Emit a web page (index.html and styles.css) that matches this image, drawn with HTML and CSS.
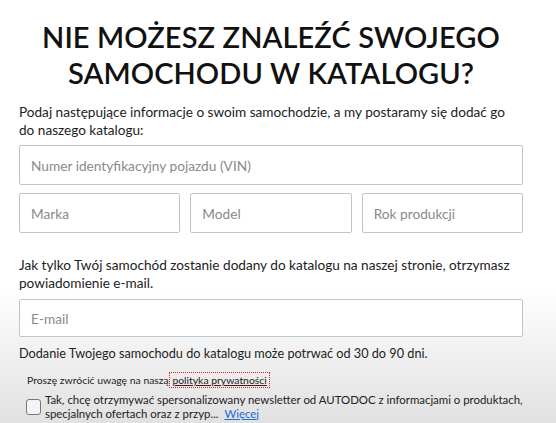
FILE: index.html
```html
<!DOCTYPE html>
<html lang="pl">
<head>
<meta charset="utf-8">
<link rel="stylesheet" href="styles.css">
</head>
<body>
<div class="page">
  <h1 class="title">NIE MOŻESZ ZNALEŹĆ SWOJEGO<br>SAMOCHODU W KATALOGU?</h1>
  <p class="lead">Podaj następujące informacje o swoim samochodzie, a my postaramy się dodać go do naszego katalogu:</p>
  <div class="field">Numer identyfikacyjny pojazdu (VIN)</div>
  <div class="row3">
    <div class="field">Marka</div>
    <div class="field">Model</div>
    <div class="field">Rok produkcji</div>
  </div>
  <p class="lead second">Jak tylko Twój samochód zostanie dodany do katalogu na naszej stronie, otrzymasz powiadomienie e-mail.</p>
  <div class="field email">E-mail</div>
  <p class="note">Dodanie Twojego samochodu do katalogu może potrwać od 30 do 90 dni.</p>
  <p class="privacy">Proszę zwrócić uwagę na naszą <span class="plink">polityka prywatności</span></p>
  <div class="consent">
    <span class="box"></span>
    <span class="ctext">Tak, chcę otrzymywać spersonalizowany newsletter od AUTODOC z informacjami o produktach, specjalnych ofertach oraz z przyp... <a class="more">Więcej</a></span>
  </div>
</div>
</body>
</html>
```
FILE: styles.css
```css
html, body { margin: 0; padding: 0; }
body {
  width: 556px;
  height: 423px;
  overflow: hidden;
  font-family: "Lato", "Liberation Sans", sans-serif;
  color: #222;
  background: linear-gradient(to bottom, #ffffff 0px, #ffffff 290px, #e1e1e1 423px);
}
.page {
  padding: 19px 33px 0 19px;
  display: flex;
  flex-direction: column;
}
.title {
  margin: 0;
  text-align: center;
  font-family: "Lato", sans-serif;
  font-weight: 600;
  font-size: 29px;
  line-height: 36px;
  letter-spacing: 0.1px;
  color: #111;
}
.lead {
  margin: 12px 0 6px 0;
  font-size: 13.6px;
  line-height: 18px;
  color: #222;
}
.lead.second { margin-top: 23px; margin-bottom: 7px; }
.field {
  box-sizing: border-box;
  height: 40px;
  border: 1px solid #bcc6cf;
  border-radius: 2px;
  background: #fff;
  padding: 0 11px;
  display: flex;
  align-items: center;
  font-size: 13.7px;
  color: #8a8a8a;
}
.row3 {
  display: grid;
  grid-template-columns: 1fr 1fr 1fr;
  column-gap: 10px;
  margin-top: 8px;
}
.email { height: 38px; }
.note {
  margin: 7px 0 0 0;
  font-size: 12.7px;
  line-height: 18px;
  color: #222;
}
.privacy {
  margin: 11px 0 0 8px;
  font-size: 10.4px;
  line-height: 14px;
  color: #222;
}
.plink {
  text-decoration: underline;
  outline: 1px dotted #e02020;
  outline-offset: 1px;
  padding: 0 1px;
}
.consent {
  display: flex;
  align-items: center;
  gap: 4px;
  margin: 6px 0 0 7px;
}
.box {
  flex: none;
  width: 13px;
  height: 14px;
  border: 1px solid #777;
  border-radius: 3px;
  background: #f4f4f4;
}
.ctext {
  font-size: 11.4px;
  line-height: 13.5px;
  color: #222;
}
.more { color: #1a6fd0; text-decoration: underline; margin-left: 3px; }
```
